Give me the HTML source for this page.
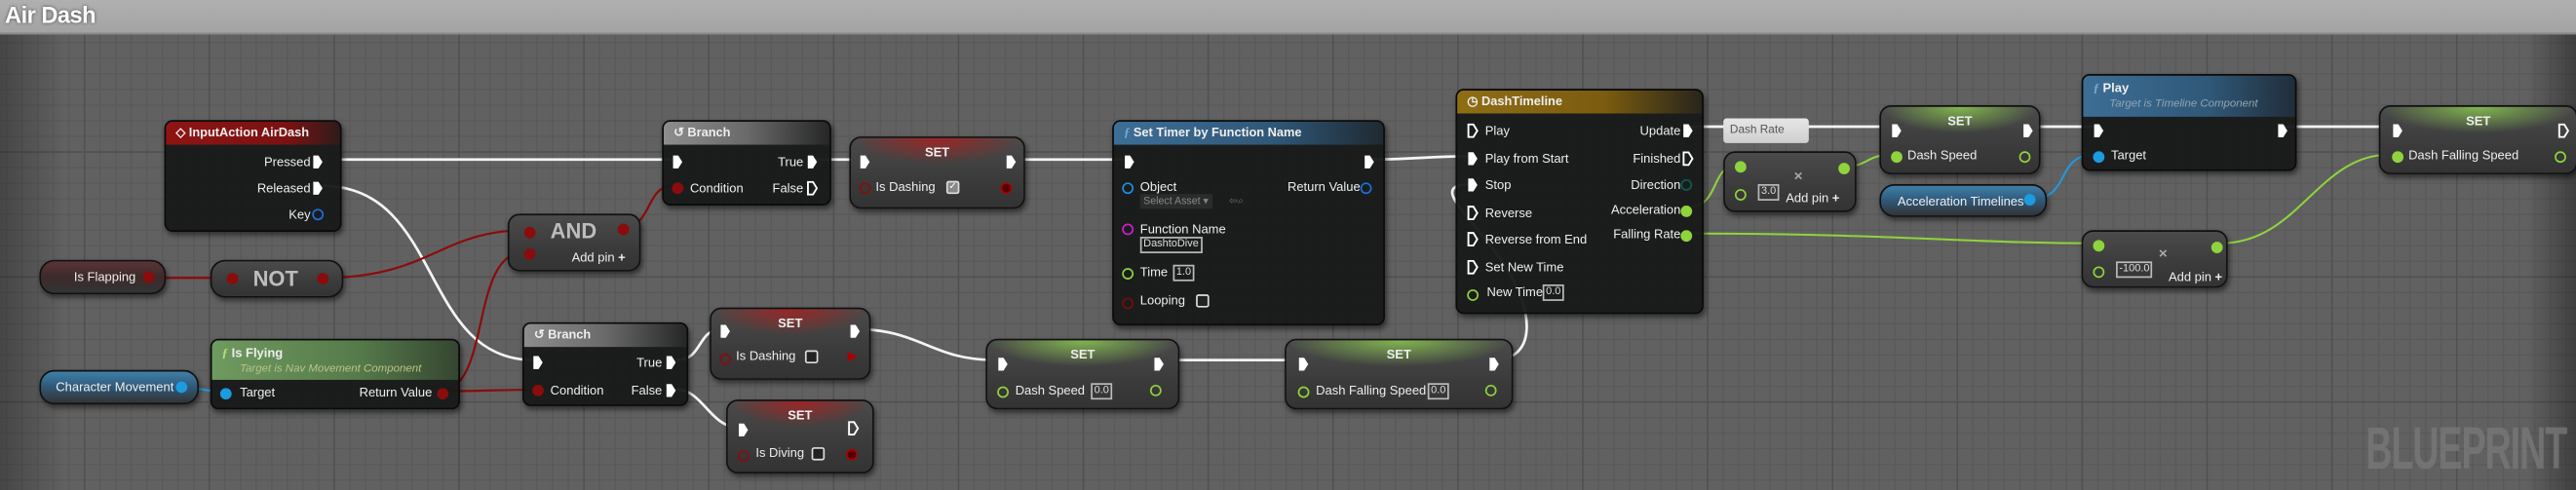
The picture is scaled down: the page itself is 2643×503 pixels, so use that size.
<!DOCTYPE html>
<html><head><meta charset="utf-8">
<style>
html,body{margin:0;padding:0;width:2643px;height:503px;overflow:hidden;background:#5f5f5f}
#s{position:absolute;left:0;top:0;width:1568px;height:298px;transform-origin:0 0;transform:scale(1.68559,1.68792);font-family:"Liberation Sans",sans-serif;color:#eee;font-size:7.7px;overflow:hidden;
background-color:#616161;
background-image:
linear-gradient(90deg,rgba(0,0,0,.28),rgba(0,0,0,0) 40px),
linear-gradient(270deg,rgba(0,0,0,.35),rgba(0,0,0,0) 30px),
linear-gradient(#505050 1px,transparent 1px),
linear-gradient(90deg,#505050 1px,transparent 1px),
linear-gradient(#5a5a5a 1px,transparent 1px),
linear-gradient(90deg,#5a5a5a 1px,transparent 1px);
background-size:100% 100%,100% 100%,76px 76px,76px 76px,9.5px 9.5px,9.5px 9.5px;
background-position:0 0,0 0,0 16px,51px 0,0 16px,51px 0}
#title{position:absolute;left:0;top:0;width:1568px;height:20px;background:linear-gradient(#b0b0b0,#a3a3a3);border-bottom:1px solid #8a8a8a;z-index:5}
#title span{position:absolute;left:3px;top:1px;font-size:14px;color:#fff;font-weight:bold;text-shadow:0 0 2px #444;letter-spacing:-.3px}
.n{position:absolute;background:rgba(24,26,25,.96);border:1px solid #0a0a0a;border-radius:5px;box-shadow:1px 2px 3px rgba(0,0,0,.5);overflow:hidden}
.h{position:absolute;left:0;top:0;right:0;height:14px;font-weight:bold;font-size:7.6px;padding-left:6px;line-height:14px;white-space:nowrap}
.v{position:absolute;background:linear-gradient(#4a4b4a,#3a3b3a 60%,#333);border:1px solid #111;border-radius:7px;box-shadow:1px 2px 3px rgba(0,0,0,.5);overflow:hidden}
.l{position:absolute;white-space:nowrap;line-height:9px}
.r{text-align:right}
.ex,.exo{position:absolute;width:7px;height:9px}
.dp{position:absolute;width:5px;height:5px;border-radius:50%;border:1.2px solid}
.box{position:absolute;border:1px solid #bbb;font-size:6.5px;line-height:8px;padding:0 1px;color:#ddd}
.cb{position:absolute;width:6px;height:6px;border:1.2px solid #ddd;border-radius:1.5px;background:#222}
svg.w{position:absolute;left:0;top:0}
</style></head><body>
<div id="s">
<div id="title"><span>Air Dash</span></div>

<svg class="w" width="1568" height="298" fill="none" stroke-linecap="round">
<g stroke="#f4f4f4" stroke-width="1.6">
<path d="M207 97 L410 97"/><path d="M497 97 L522 97"/><path d="M612 97 L686 97"/>
<path d="M831 97 C860 97 870 95 896 95"/><path d="M1027 77 L1150 77"/><path d="M1232 77 L1275 77"/><path d="M1387 77 L1455 77"/>
<path d="M196 113 C270 113 255 219 325 219"/>
<path d="M412 219 C428 219 424 200 440 200"/>
<path d="M412 237 C428 237 432 260 450 260"/>
<path d="M518 200 C562 200 565 219 607 219"/>
<path d="M707 219 L790 219"/>
<path d="M909 219 C935 219 935 190 915 160 C895 130 868 112 896 112"/>
</g>
<g stroke="#8a0c0c" stroke-width="1.3">
<path d="M88 169 L138 169"/><path d="M196 169 C262 169 268 140 320 140"/>
<path d="M379 138 C398 138 392 113 410 113"/>
<path d="M267 238 C300 238 285 153 320 153"/>
<path d="M267 238 C292 238 300 237 326 237"/>
</g>
<g stroke="#1c9be0" stroke-width="1.2"><path d="M107 235 C120 235 122 238 136 238"/><path d="M1233 122 C1262 122 1250 94 1275 94"/></g>
<g stroke="#8fd43c" stroke-width="1.2">
<path d="M1027 126 C1048 126 1040 100 1059 100"/><path d="M1124 101 C1138 101 1135 94 1153 94"/>
<path d="M1027 142 C1150 142 1200 148 1277 148"/><path d="M1351 148 C1400 148 1410 94 1455 94"/>
</g>
</svg>

<svg width="0" height="0" style="position:absolute"><defs>
<symbol id="e" viewBox="0 0 6 8"><path d="M.5 .5h2.8l2.2 3.5-2.2 3.5H.5z" fill="#fff"/></symbol>
<symbol id="eo" viewBox="0 0 6 8"><path d="M.6 .6h2.7l2.1 3.4-2.1 3.4H.6z" fill="none" stroke="#fff" stroke-width="1"/></symbol>
</defs></svg>

<!-- InputAction -->
<div class="n" style="left:100px;top:73px;width:106px;height:66px">
<div class="h" style="background:linear-gradient(90deg,#8f1414,#7a1212 70%,rgba(120,20,20,.2))">◇ InputAction AirDash</div>
<div class="l r" style="right:18px;top:20px">Pressed</div><svg class="ex" style="left:89px;top:20px"><use href="#e"/></svg>
<div class="l r" style="right:18px;top:36px">Released</div><svg class="ex" style="left:89px;top:36px"><use href="#e"/></svg>
<div class="l r" style="right:18px;top:52px">Key</div><div class="dp" style="left:89px;top:53px;border-color:#1d6fe0"></div>
</div>

<!-- Branch1 -->
<div class="n" style="left:403px;top:73px;width:101px;height:50px">
<div class="h" style="background:linear-gradient(90deg,#8d8d8d,#6a6a6a 50%,rgba(60,60,60,.3))">↺ Branch</div>
<svg class="ex" style="left:5px;top:20px"><use href="#e"/></svg>
<div class="l r" style="right:16px;top:20px">True</div><svg class="ex" style="left:87px;top:20px"><use href="#e"/></svg>
<div class="dp" style="left:5px;top:37px;background:#8a0c0c;border-color:#8a0c0c"></div><div class="l" style="left:16px;top:36px">Condition</div>
<div class="l r" style="right:16px;top:36px">False</div><svg class="exo" style="left:87px;top:36px"><use href="#eo"/></svg>
</div>

<!-- SET red 1 -->
<div class="v" style="left:517px;top:83px;width:105px;height:42px">
<div style="position:absolute;left:0;right:0;top:0;height:16px;background:radial-gradient(ellipse at 50% 0,rgba(170,30,30,.85),rgba(120,20,20,0) 70%)"></div>
<div class="l" style="left:0;right:0;text-align:center;top:4px;font-weight:bold">SET</div>
<svg class="ex" style="left:5px;top:10px"><use href="#e"/></svg><svg class="ex" style="left:94px;top:10px"><use href="#e"/></svg>
<div class="dp" style="left:5px;top:27px;border-color:#8a0c0c"></div><div class="l" style="left:15px;top:25px">Is Dashing</div>
<div class="cb" style="left:58px;top:26px;background:#888;font-size:6px;line-height:6px;color:#fff;text-align:center">✓</div>
<div class="dp" style="left:91px;top:27px;border-color:#a00;background:#500"></div>
</div>

<!-- Set Timer -->
<div class="n" style="left:677px;top:73px;width:164px;height:123px">
<div class="h" style="background:linear-gradient(90deg,#3d6e96,#2f5777 60%,rgba(40,70,100,.3))"><i style="color:#7ac;font-family:'Liberation Serif',serif">ƒ</i> Set Timer by Function Name</div>
<svg class="ex" style="left:6px;top:20px"><use href="#e"/></svg><svg class="ex" style="left:152px;top:20px"><use href="#e"/></svg>
<div class="dp" style="left:5px;top:37px;border-color:#1d8fe0"></div><div class="l" style="left:16px;top:35px">Object</div>
<div class="l" style="left:16px;top:44px;background:#2a2c2b;color:#888;font-size:6.3px;padding:0 2px">Select Asset ▾</div><div class="l" style="left:70px;top:44px;color:#666;font-size:6.5px">⇦⌕</div>
<div class="l r" style="right:14px;top:35px">Return Value</div><div class="dp" style="left:150px;top:37px;border-color:#1d6fe0"></div>
<div class="dp" style="left:5px;top:62px;border-color:#d21bd2"></div><div class="l" style="left:16px;top:61px">Function Name</div>
<div class="box" style="left:16px;top:70px">DashtoDive</div>
<div class="dp" style="left:5px;top:89px;border-color:#8fd43c"></div><div class="l" style="left:16px;top:87px">Time</div><div class="box" style="left:36px;top:87px">1.0</div>
<div class="dp" style="left:5px;top:107px;border-color:#7a0a0a"></div><div class="l" style="left:16px;top:104px">Looping</div><div class="cb" style="left:50px;top:105px"></div>
</div>

<!-- Timeline -->
<div class="n" style="left:886px;top:54px;width:149px;height:135px">
<div class="h" style="background:linear-gradient(90deg,#8f6d14,#7b5c10 60%,rgba(90,70,20,.2))">◷ DashTimeline</div>
<svg class="exo" style="left:6px;top:20px"><use href="#eo"/></svg><div class="l" style="left:17px;top:20px">Play</div>
<svg class="ex" style="left:6px;top:37px"><use href="#e"/></svg><div class="l" style="left:17px;top:37px">Play from Start</div>
<svg class="ex" style="left:6px;top:53px"><use href="#e"/></svg><div class="l" style="left:17px;top:53px">Stop</div>
<svg class="exo" style="left:6px;top:70px"><use href="#eo"/></svg><div class="l" style="left:17px;top:70px">Reverse</div>
<svg class="exo" style="left:6px;top:86px"><use href="#eo"/></svg><div class="l" style="left:17px;top:86px">Reverse from End</div>
<svg class="exo" style="left:6px;top:103px"><use href="#eo"/></svg><div class="l" style="left:17px;top:103px">Set New Time</div>
<div class="dp" style="left:6px;top:121px;border-color:#8fd43c"></div><div class="l" style="left:18px;top:118px">New Time</div><div class="box" style="left:52px;top:118px">0.0</div>
<div class="l r" style="right:13px;top:20px">Update</div><svg class="ex" style="left:137px;top:20px"><use href="#e"/></svg>
<div class="l r" style="right:13px;top:37px">Finished</div><svg class="exo" style="left:137px;top:37px"><use href="#eo"/></svg>
<div class="l r" style="right:13px;top:53px">Direction</div><div class="dp" style="left:136px;top:54px;border-color:#0c5c54"></div>
<div class="l r" style="right:13px;top:68px">Acceleration</div><div class="dp" style="left:136px;top:70px;border-color:#8fd43c;background:#8fd43c"></div>
<div class="l r" style="right:13px;top:83px">Falling Rate</div><div class="dp" style="left:136px;top:85px;border-color:#8fd43c;background:#8fd43c"></div>
</div>

<!-- Dash Rate comment -->
<div style="position:absolute;left:1049px;top:72px;width:52px;height:15px;background:linear-gradient(#e6e6e6,#cfcfcf);border-radius:2px;color:#555;font-size:7px;line-height:15px;padding-left:4px;box-sizing:border-box">Dash Rate</div>

<!-- Multiply 1 -->
<div class="v" style="left:1049px;top:92px;width:79px;height:35px">
<div class="dp" style="left:6px;top:5px;border-color:#8fd43c;background:#8fd43c"></div><div class="dp" style="left:69px;top:6px;border-color:#8fd43c;background:#8fd43c"></div>
<div class="dp" style="left:6px;top:22px;border-color:#8fd43c"></div>
<div class="box" style="left:20px;top:19px">3.0</div>
<div class="l" style="left:42px;top:10px;color:#aaa;font-weight:bold;font-size:9px">×</div>
<div class="l" style="left:37px;top:23px">Add pin <b>+</b></div>
</div>

<!-- SET Dash Speed top -->
<div class="v" style="left:1144px;top:64px;width:96px;height:40px">
<div style="position:absolute;left:0;right:0;top:0;height:16px;background:radial-gradient(ellipse at 50% 0,rgba(140,200,80,.85),rgba(90,140,50,0) 70%)"></div>
<div class="l" style="left:0;right:0;text-align:center;top:4px;font-weight:bold">SET</div>
<svg class="ex" style="left:6px;top:10px"><use href="#e"/></svg><svg class="ex" style="left:86px;top:10px"><use href="#e"/></svg>
<div class="dp" style="left:6px;top:27px;border-color:#8fd43c;background:#8fd43c"></div><div class="l" style="left:16px;top:25px">Dash Speed</div>
<div class="dp" style="left:84px;top:27px;border-color:#8fd43c"></div>
</div>

<!-- Acceleration Timelines -->
<div class="v" style="left:1144px;top:112px;width:100px;height:18px;border-radius:9px;background:linear-gradient(#3f7fa8,#2f5878 50%,#333 100%)">
<div class="l" style="left:10px;top:5px">Acceleration Timelines</div>
<div class="dp" style="left:87px;top:5px;border-color:#1c9be0;background:#1c9be0"></div>
</div>

<!-- Play -->
<div class="n" style="left:1267px;top:45px;width:129px;height:57px">
<div style="position:absolute;left:0;right:0;top:0;height:25px;background:linear-gradient(90deg,#3d6e96,#2f5777 60%,rgba(40,70,100,.4))"></div>
<div class="l" style="left:6px;top:3px;font-weight:bold"><i style="color:#7ac;font-family:'Liberation Serif',serif">ƒ</i> Play</div>
<div class="l" style="left:16px;top:13px;color:#8fa6b4;font-style:italic;font-size:6.8px">Target is Timeline Component</div>
<svg class="ex" style="left:6px;top:29px"><use href="#e"/></svg><svg class="ex" style="left:118px;top:29px"><use href="#e"/></svg>
<div class="dp" style="left:6px;top:46px;border-color:#1c9be0;background:#1c9be0"></div><div class="l" style="left:17px;top:44px">Target</div>
</div>

<!-- SET Dash Falling Speed top -->
<div class="v" style="left:1448px;top:64px;width:119px;height:40px">
<div style="position:absolute;left:0;right:0;top:0;height:16px;background:radial-gradient(ellipse at 50% 0,rgba(140,200,80,.85),rgba(90,140,50,0) 70%)"></div>
<div class="l" style="left:0;right:0;text-align:center;top:4px;font-weight:bold">SET</div>
<svg class="ex" style="left:7px;top:10px"><use href="#e"/></svg><svg class="exo" style="left:108px;top:10px"><use href="#eo"/></svg>
<div class="dp" style="left:7px;top:27px;border-color:#8fd43c;background:#8fd43c"></div><div class="l" style="left:17px;top:25px">Dash Falling Speed</div>
<div class="dp" style="left:106px;top:27px;border-color:#8fd43c"></div>
</div>

<!-- Multiply 2 -->
<div class="v" style="left:1267px;top:140px;width:87px;height:33px">
<div class="dp" style="left:6px;top:5px;border-color:#8fd43c;background:#8fd43c"></div><div class="dp" style="left:78px;top:6px;border-color:#8fd43c;background:#8fd43c"></div>
<div class="dp" style="left:6px;top:21px;border-color:#8fd43c"></div>
<div class="box" style="left:20px;top:18px">-100.0</div>
<div class="l" style="left:46px;top:9px;color:#aaa;font-weight:bold;font-size:9px">×</div>
<div class="l" style="left:52px;top:23px">Add pin <b>+</b></div>
</div>

<!-- Is Flapping -->
<div class="v" style="left:24px;top:158px;width:75px;height:19px;border-radius:9px;background:linear-gradient(#5a3535,#3d2a2a 50%,#333)">
<div class="l" style="left:20px;top:5px">Is Flapping</div>
<div class="dp" style="left:62px;top:6px;border-color:#8a0c0c;background:#8a0c0c"></div>
</div>

<!-- NOT -->
<div class="v" style="left:128px;top:158px;width:79px;height:21px;border-radius:9px">
<div class="dp" style="left:9px;top:7px;border-color:#8a0c0c;background:#8a0c0c"></div>
<div class="l" style="left:25px;top:5px;font-size:13px;font-weight:bold;color:#bdbdbd;line-height:12px">NOT</div>
<div class="dp" style="left:64px;top:7px;border-color:#8a0c0c;background:#8a0c0c"></div>
</div>

<!-- AND -->
<div class="v" style="left:309px;top:130px;width:79px;height:33px">
<div class="dp" style="left:9px;top:7px;border-color:#8a0c0c;background:#8a0c0c"></div>
<div class="dp" style="left:9px;top:20px;border-color:#8a0c0c;background:#8a0c0c"></div>
<div class="l" style="left:25px;top:4px;font-size:13px;font-weight:bold;color:#bdbdbd;line-height:12px">AND</div>
<div class="l" style="left:38px;top:21px">Add pin <b>+</b></div>
<div class="dp" style="left:66px;top:5px;border-color:#8a0c0c;background:#8a0c0c"></div>
</div>

<!-- Character Movement -->
<div class="v" style="left:24px;top:225px;width:95px;height:19px;border-radius:9px;background:linear-gradient(#3f7fa8,#2f5878 50%,#333 100%)">
<div class="l" style="left:9px;top:5px">Character Movement</div>
<div class="dp" style="left:82px;top:6px;border-color:#1c9be0;background:#1c9be0"></div>
</div>

<!-- Is Flying -->
<div class="n" style="left:128px;top:206px;width:150px;height:41px">
<div style="position:absolute;left:0;right:0;top:0;height:24px;background:linear-gradient(90deg,#6f9a60,#557a4a 60%,rgba(80,110,70,.5))"></div>
<div class="l" style="left:6px;top:3px;font-weight:bold"><i style="color:#b4e07a;font-family:'Liberation Serif',serif">ƒ</i> Is Flying</div>
<div class="l" style="left:17px;top:13px;color:#b8c488;font-style:italic;font-size:6.8px">Target is Nav Movement Component</div>
<div class="dp" style="left:5px;top:29px;border-color:#1c9be0;background:#1c9be0"></div><div class="l" style="left:17px;top:27px">Target</div>
<div class="l r" style="right:16px;top:27px">Return Value</div><div class="dp" style="left:137px;top:29px;border-color:#8a0c0c;background:#8a0c0c"></div>
</div>

<!-- Branch2 -->
<div class="n" style="left:318px;top:196px;width:99px;height:49px">
<div class="h" style="background:linear-gradient(90deg,#8d8d8d,#6a6a6a 50%,rgba(60,60,60,.3))">↺ Branch</div>
<svg class="ex" style="left:5px;top:19px"><use href="#e"/></svg>
<div class="l r" style="right:15px;top:19px">True</div><svg class="ex" style="left:86px;top:19px"><use href="#e"/></svg>
<div class="dp" style="left:5px;top:37px;background:#8a0c0c;border-color:#8a0c0c"></div><div class="l" style="left:16px;top:36px">Condition</div>
<div class="l r" style="right:15px;top:36px">False</div><svg class="ex" style="left:86px;top:36px"><use href="#e"/></svg>
</div>

<!-- SET Is Dashing 2 -->
<div class="v" style="left:432px;top:187px;width:96px;height:42px">
<div style="position:absolute;left:0;right:0;top:0;height:16px;background:radial-gradient(ellipse at 50% 0,rgba(170,30,30,.85),rgba(120,20,20,0) 70%)"></div>
<div class="l" style="left:0;right:0;text-align:center;top:4px;font-weight:bold">SET</div>
<svg class="ex" style="left:5px;top:9px"><use href="#e"/></svg><svg class="ex" style="left:84px;top:9px"><use href="#e"/></svg>
<div class="dp" style="left:5px;top:27px;border-color:#8a0c0c"></div><div class="l" style="left:15px;top:24px">Is Dashing</div>
<div class="cb" style="left:57px;top:25px"></div>
<div class="l" style="left:83px;top:24px;color:#a00">▶</div>
</div>

<!-- SET Is Diving -->
<div class="v" style="left:442px;top:243px;width:88px;height:43px">
<div style="position:absolute;left:0;right:0;top:0;height:16px;background:radial-gradient(ellipse at 50% 0,rgba(170,30,30,.85),rgba(120,20,20,0) 70%)"></div>
<div class="l" style="left:0;right:0;text-align:center;top:4px;font-weight:bold">SET</div>
<svg class="ex" style="left:6px;top:13px"><use href="#e"/></svg><svg class="exo" style="left:73px;top:12px"><use href="#eo"/></svg>
<div class="dp" style="left:6px;top:30px;border-color:#8a0c0c"></div><div class="l" style="left:17px;top:27px">Is Diving</div>
<div class="cb" style="left:51px;top:28px"></div>
<div class="dp" style="left:72px;top:29px;border-color:#a00;background:#500"></div>
</div>

<!-- SET Dash Speed bottom -->
<div class="v" style="left:600px;top:206px;width:116px;height:41px">
<div style="position:absolute;left:0;right:0;top:0;height:16px;background:radial-gradient(ellipse at 50% 0,rgba(140,200,80,.85),rgba(90,140,50,0) 70%)"></div>
<div class="l" style="left:0;right:0;text-align:center;top:4px;font-weight:bold">SET</div>
<svg class="ex" style="left:6px;top:10px"><use href="#e"/></svg><svg class="ex" style="left:101px;top:10px"><use href="#e"/></svg>
<div class="dp" style="left:6px;top:28px;border-color:#8fd43c"></div><div class="l" style="left:17px;top:26px">Dash Speed</div>
<div class="box" style="left:63px;top:26px">0.0</div>
<div class="dp" style="left:99px;top:27px;border-color:#8fd43c"></div>
</div>

<!-- SET Dash Falling Speed bottom -->
<div class="v" style="left:782px;top:206px;width:137px;height:41px">
<div style="position:absolute;left:0;right:0;top:0;height:16px;background:radial-gradient(ellipse at 50% 0,rgba(140,200,80,.85),rgba(90,140,50,0) 70%)"></div>
<div class="l" style="left:0;right:0;text-align:center;top:4px;font-weight:bold">SET</div>
<svg class="ex" style="left:7px;top:10px"><use href="#e"/></svg><svg class="ex" style="left:123px;top:10px"><use href="#e"/></svg>
<div class="dp" style="left:7px;top:28px;border-color:#8fd43c"></div><div class="l" style="left:18px;top:26px">Dash Falling Speed</div>
<div class="box" style="left:86px;top:26px">0.0</div>
<div class="dp" style="left:121px;top:27px;border-color:#8fd43c"></div>
</div>

<div style="position:absolute;left:1440px;top:254px;font-size:36px;font-weight:bold;color:#7a7a7a;opacity:.75;transform:scaleX(.62);transform-origin:0 0;letter-spacing:-1px;line-height:38px">BLUEPRINT</div>
</div>
</body></html>
